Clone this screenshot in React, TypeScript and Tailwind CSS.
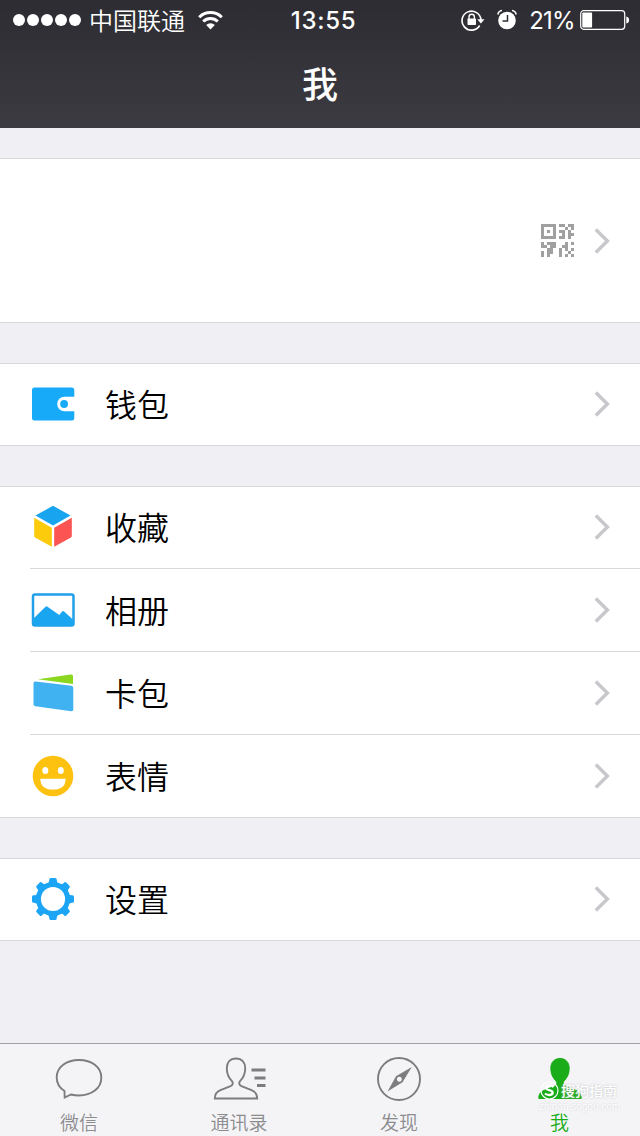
import type { ReactNode } from 'react';

const QR_ROWS = [
  '11111.11.11',
  '1...1...1.1',
  '1.1.1.11.1.',
  '1...1..1.11',
  '11111.11.1.',
  '...........',
  '1.111...1.1',
  '11.11..11..',
  '..11..1.1.1',
  '1.11..1..1.',
  '1.1...1.1.1',
];

function QrCode() {
  return (
    <svg width="33" height="33" viewBox="0 0 11 11" fill="#a0a0a0" shapeRendering="crispEdges">
      {QR_ROWS.flatMap((row, y) =>
        row.split('').map((cell, x) =>
          cell === '1' ? <rect key={`${x}-${y}`} x={x} y={y} width="1" height="1" /> : null,
        ),
      )}
    </svg>
  );
}

function Chevron() {
  return (
    <svg width="18" height="28" viewBox="0 0 18 28" fill="none" stroke="#c7c7cc" strokeWidth="3.4">
      <path d="M2.800 2.500 14.400 14 2.800 25.500" />
    </svg>
  );
}

function WalletIcon() {
  return (
    <svg width="44" height="44" viewBox="0 0 44 44" fill="#17aaf8">
      <path d="M3.500 5.500H41Q43.300 5.500 43.300 8V14.700H33.500A7.300 7.300 0 0 0 33.500 29.300H43.300V36Q43.300 38.500 41 38.500H3.500Q1 38.500 1 36V8Q1 5.500 3.500 5.500Z" />
      <circle cx="33.100" cy="22" r="3.900" />
    </svg>
  );
}

function CubeIcon() {
  return (
    <svg width="44" height="44" viewBox="0 0 44 44">
      <path fill="#18a4ee" d="m22 .8 17.500 9.700L22 20.500 4.500 10.500Z" />
      <path fill="#fccb0c" d="m3.200 12.800 17.600 10v19L4 32.400q-.8-.5-.8-1.400Z" />
      <path fill="#fb5452" d="M40.800 12.800 23.200 22.800v19L40 32.400q.8-.5.8-1.400Z" />
    </svg>
  );
}

function AlbumIcon() {
  return (
    <svg width="44" height="44" viewBox="0 0 44 44">
      <rect x="2" y="6.500" width="40.500" height="31" rx="2" fill="#fff" stroke="#229fe9" strokeWidth="2.500" />
      <path
        fill="#1aa5f0"
        d="M2 31 14.500 18.800q1-1 2 0L28.300 27l2.800-3.500q1-1 2 0L42.500 32v4q0 1.500-1.500 1.500H3.500Q2 37.500 2 36Z"
      />
    </svg>
  );
}

function CardsIcon() {
  return (
    <svg width="44" height="44" viewBox="0 0 44 44">
      <path fill="#8bd61f" d="M7 8.300 39.700 3.400q2.300-.2 2.300 1.500v8Z" />
      <path fill="#40b2f2" d="m4.500 10.400 36 4.300q1.800.3 1.800 2V38.500q0 2-2 1.800L4.300 35.300q-1.800-.3-1.800-2V12.200q0-2 2-1.800Z" />
    </svg>
  );
}

function SmileIcon() {
  return (
    <svg width="44" height="44" viewBox="0 0 44 44">
      <circle cx="22" cy="22" r="20.300" fill="#fdc20f" />
      <ellipse cx="14.300" cy="16.500" rx="3" ry="3.500" fill="#fff" />
      <ellipse cx="29.800" cy="16.500" rx="3" ry="3.500" fill="#fff" />
      <path fill="#fff" d="M9.300 24.700H34.700Q34.400 35.600 22 35.600T9.300 24.700Z" />
    </svg>
  );
}

const GEAR_ANGLES = [0, 45, 90, 135, 180, 225, 270, 315];

function GearIcon() {
  return (
    <svg width="44" height="44" viewBox="0 0 44 44">
      {GEAR_ANGLES.map((angle) => (
        <path
          key={angle}
          fill="#1da5f5"
          d="M15.500 7.500Q18.300 6 18.300 3V2.500Q18.300 1 19.800 1h4.400q1.500 0 1.500 1.500V3Q25.700 6 28.500 7.500Z"
          transform={`rotate(${angle} 22 22)`}
        />
      ))}
      <circle cx="22" cy="22" r="14.600" fill="#fff" stroke="#1da5f5" strokeWidth="5" />
    </svg>
  );
}

function Row({ icon, label, first = false }: { icon: ReactNode; label: string; first?: boolean }) {
  return (
    <div className={`flex items-center pr-[29px] pl-[31px] ${first ? 'h-[81px] pb-px' : 'h-[82px]'}`}>
      {icon}
      <span className="ml-[30px] flex-1 pb-[2px] text-[32px] leading-[48px] font-[350] text-black">{label}</span>
      <Chevron />
    </div>
  );
}

function Divider() {
  return <div className="ml-[30px] h-px bg-[#d9d9dc]" />;
}

function Group({ children }: { children: ReactNode }) {
  return <section className="mt-10 border-y border-[#d9d9dc] bg-white">{children}</section>;
}

function StatusBar() {
  return (
    <div className="relative flex h-10 items-center text-white">
      <div className="flex gap-[2px] pl-[13px]">
        {[0, 1, 2, 3, 4].map((dot) => (
          <span key={dot} className="h-3 w-3 rounded-full bg-white" />
        ))}
      </div>
      <span className="ml-[8px] text-[24px] leading-10 font-[350]">中国联通</span>
      <svg className="ml-[13px]" width="25" height="20" viewBox="0 0 25 20" fill="none" stroke="#fff" strokeWidth="3">
        <path d="M1.200 7.200a16 16 0 0 1 22.600 0M5.200 11.500a10.300 10.300 0 0 1 14.600 0" />
        <path d="M12.500 19.500 8.200 15a6.100 6.100 0 0 1 8.600 0Z" fill="#fff" stroke="none" />
      </svg>
      <span className="absolute inset-x-0 pt-[2px] pl-[7px] text-center font-[Inter,sans-serif] text-[24px] leading-10 font-medium tracking-[0.700px]">
        13:55
      </span>
      <div className="ml-auto flex items-center">
        <svg width="24" height="22" viewBox="0 0 24 22" fill="none" stroke="#fff">
          <path d="M18.700 16.500A9.500 9.500 0 1 1 20 11" strokeWidth="1.600" />
          <path d="M16.300 10.300h7.200L19.900 14.500Z" fill="#fff" stroke="none" />
          <rect x="6.500" y="9.500" width="8.500" height="6.500" rx=".8" fill="#fff" stroke="none" />
          <path d="M8 10V8a2.700 2.700 0 0 1 5.400 0v2" strokeWidth="1.400" />
        </svg>
        <svg className="ml-3" width="20" height="22" viewBox="0 0 20 22" fill="none">
          <circle cx="10" cy="11.500" r="8.800" fill="#fff" />
          <path d="M10.500 6v6H5.500" stroke="#303036" strokeWidth="1.500" />
          <path d="M.8 5.500Q1.500 2 5 1.500M19.200 5.500Q18.500 2 15 1.500" stroke="#fff" strokeWidth="1.500" />
        </svg>
        <span className="ml-3 pt-[2px] font-[Inter,sans-serif] text-[24px] leading-10 tracking-[-0.700px]">
          21%
        </span>
        <svg className="mr-[10px] ml-[5px]" width="50" height="20" viewBox="0 0 50 20">
          <rect x=".7" y=".7" width="44" height="18.600" rx="3" fill="none" stroke="#fff" strokeWidth="1.200" />
          <rect x="2.300" y="2.500" width="9.800" height="15" rx="1" fill="#fff" />
          <path d="M46.300 6.500q2.800.5 2.800 3.500t-2.800 3.500Z" fill="#fff" />
        </svg>
      </div>
    </div>
  );
}

function Tab({ icon, label, active = false }: { icon: ReactNode; label: string; active?: boolean }) {
  return (
    <div className={`flex w-1/4 flex-col items-center pt-3 ${active ? 'text-[#1aad19]' : 'pr-[2px] text-[#7d7d80]'}`}>
      {icon}
      <span className={`mt-[11px] text-[19px] leading-[18px] font-[350] ${active ? 'pr-px' : 'text-[#8c8c8f]'}`}>
        {label}
      </span>
    </div>
  );
}

const PERSON =
  'M25 1.500C19.200 1.500 15.800 5.500 15.800 11.200C15.800 17 18 21 20.800 23.800C22.500 25.800 22 28 19.500 29.200L9.500 33.200C5 35 3.800 37.500 3.800 41.500H46.200C46.200 37.500 45 35 40.500 33.200L30.500 29.200C28 28 27.500 25.800 29.200 23.800C32 21 34.200 17 34.200 11.200C34.200 5.500 30.800 1.500 25 1.500Z';

export default function App() {
  return (
    <div className="relative flex h-[1136px] w-[640px] flex-col overflow-hidden bg-[#efeff4] font-['Noto_Sans_CJK_SC',sans-serif]">
      <header className="h-32 bg-linear-to-b from-[#2d2c32] to-[#3c3b41]">
        <StatusBar />
        <h1 className="text-center text-[36px] leading-[85px] font-medium text-white">我</h1>
      </header>

      <main className="flex-1">
        <section className="mt-[30px] flex h-[165px] items-center justify-end border-y border-[#d9d9dc] bg-white pr-[29px]">
          <QrCode />
          <div className="ml-[19px]">
            <Chevron />
          </div>
        </section>
        <Group>
          <Row first icon={<WalletIcon />} label="钱包" />
        </Group>
        <Group>
          <Row first icon={<CubeIcon />} label="收藏" />
          <Divider />
          <Row icon={<AlbumIcon />} label="相册" />
          <Divider />
          <Row icon={<CardsIcon />} label="卡包" />
          <Divider />
          <Row icon={<SmileIcon />} label="表情" />
        </Group>
        <Group>
          <Row first icon={<GearIcon />} label="设置" />
        </Group>
      </main>

      <nav className="flex h-[93px] border-t border-[#a2a2a6] bg-[#f4f4f7]">
        <Tab
          label="微信"
          icon={
            <svg width="50" height="46" viewBox="0 0 50 46" fill="none" stroke="currentColor" strokeWidth="1.900">
              <path d="M10.500 35C5 31.500 2.700 26.500 2.700 21.500C2.700 11 12.500 4 25 4S47.300 11 47.300 21.700S37.500 39.500 25 39.500Q20.500 39.500 17 38.500L10.700 41.500Z" />
            </svg>
          }
        />
        <Tab
          label="通讯录"
          icon={
            <svg width="56" height="46" viewBox="0 -1 56 46" fill="none" stroke="currentColor" strokeWidth="1.900">
              <path d={PERSON} />
              <path d="M40.500 13H54.500M43.500 21H54.500M46 28.500H54.500" strokeWidth="2.800" />
            </svg>
          }
        />
        <Tab
          label="发现"
          icon={
            <svg width="50" height="46" viewBox="0 0 50 46" fill="none" stroke="currentColor" strokeWidth="1.900">
              <circle cx="25" cy="23" r="21" />
              <path
                d="M37.800 11 28.500 26.300 13.500 35.500 22 20.200ZM25.300 20.700a2.500 2.500 0 1 0 .1 0Z"
                fill="currentColor"
                fillRule="evenodd"
                stroke="none"
              />
            </svg>
          }
        />
        <Tab
          active
          label="我"
          icon={
            <svg width="50" height="46" viewBox="0 -1 50 46" fill="currentColor">
              <path d={PERSON} stroke="currentColor" />
            </svg>
          }
        />
      </nav>

      <div className="absolute top-[1078px] left-[539px] flex w-[82px] flex-col text-white">
        <div className="flex items-center">
          <svg width="21" height="21" viewBox="0 0 21 21" fill="none" stroke="#fff">
            <circle cx="10.500" cy="10.500" r="8.500" strokeWidth="1.200" />
            <path
              d="M14.500 7Q13 5.500 10 5.700T7.200 8.500Q8 10 10.800 10.300T13.700 13Q13 15 10.300 15T6 13.500"
              strokeWidth="2.300"
            />
          </svg>
          <span className="ml-px text-[14px] leading-6 font-medium whitespace-nowrap [text-shadow:0_0_2px_#b9b9bd]">
            搜狗指南
          </span>
        </div>
        <span className="-mt-px font-['Liberation_Sans',sans-serif] text-[10px] leading-[11px] whitespace-nowrap [text-shadow:0_0_2px_#c9c9cd]">
          zhinan.sogou.com
        </span>
      </div>
    </div>
  );
}
